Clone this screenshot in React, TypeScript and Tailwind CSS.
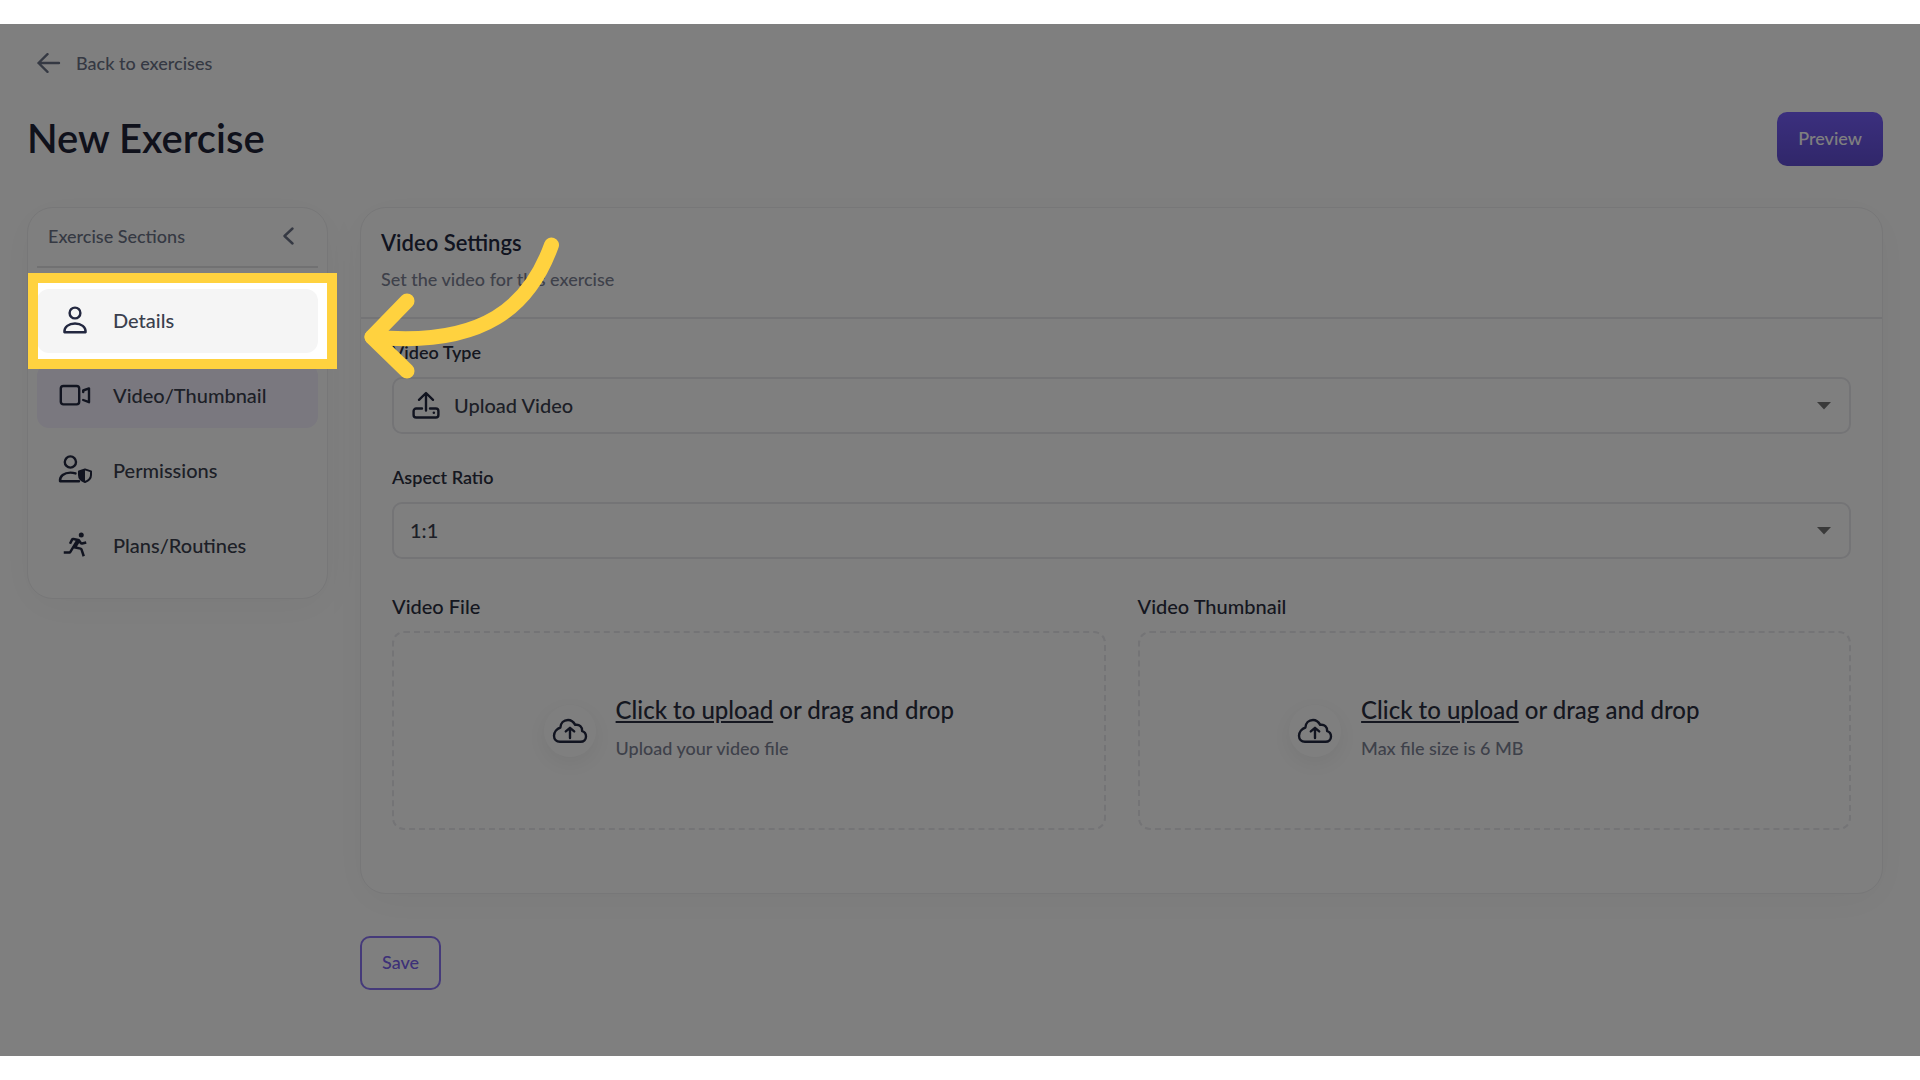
import type { ReactNode } from "react";
import { BiRun } from "react-icons/bi";

function PersonIcon() {
  return (
    <svg width="34" height="32" viewBox="0 0 34 32" fill="none" stroke="currentColor" strokeWidth="2.4" strokeLinejoin="round">
      <circle cx="17" cy="9" r="5.4" />
      <path d="M6.4 28.2h21.2c.4-5.2-4.4-8.7-10.6-8.7S6 23 6.4 28.2Z" />
    </svg>
  );
}

function VideoIcon() {
  return (
    <svg width="34" height="32" viewBox="0 0 34 32" fill="none" stroke="currentColor" strokeWidth="2.4" strokeLinejoin="round" strokeLinecap="round">
      <rect x="2.8" y="7" width="18.4" height="18.4" rx="2.6" />
      <path d="M25.2 13v-1.5L31 9.4v13.8l-5.8-2.2" />
    </svg>
  );
}

function PermissionsIcon() {
  return (
    <svg width="34" height="32" viewBox="0 0 34 32" fill="none" stroke="currentColor" strokeWidth="2.4" strokeLinejoin="round" strokeLinecap="round">
      <circle cx="12.4" cy="8" r="5.6" />
      <path d="M17.5 19.4c-1.500-.5-3.200-.8-5.100-.8-6.200 0-10.900 3.400-10.400 8.600h19" />
      <path d="M27 15.4l6 2v3.600c0 3.200-2.400 5.600-6 7-3.600-1.400-6-3.800-6-7v-3.600Z" strokeWidth="2" />
      <path d="M27 15.4v12.600c-3.600-1.400-6-3.800-6-7v-3.600Z" fill="currentColor" stroke="none" />
    </svg>
  );
}

function DriveUploadIcon() {
  return (
    <svg width="28" height="28" viewBox="0 0 28 28" fill="none" stroke="currentColor" strokeWidth="2.4" strokeLinejoin="round" strokeLinecap="round">
      <path d="M14 19.5V2.2M7 8.800l7-6.800 7 6.800" />
      <path d="M10 17.5H4.200a2.600 2.600 0 0 0-2.600 2.600v3.800a2.600 2.600 0 0 0 2.600 2.600h19.600a2.600 2.600 0 0 0 2.600-2.600v-3.800a2.600 2.600 0 0 0-2.600-2.600H18" />
      <path d="M21.800 21.800h.1" />
    </svg>
  );
}

function CloudUploadIcon() {
  return (
    <svg width="36" height="26" viewBox="0 0 36 26" fill="none" stroke="currentColor" strokeWidth="2.4" strokeLinejoin="round" strokeLinecap="round">
      <path d="M8 23.8h20.500c3.300 0 5.500-2.300 5.500-5.300 0-2.800-1.600-4.800-3.900-5.400.5-4.200-2.800-7-6.900-6.200C21.600 3.900 18.900 2 16 2c-4.400 0-7.300 3.300-7.600 7.500C4.800 10.700 2 14 2 17.800c0 3.600 2.400 6 6 6Z" />
      <path d="M18 20V10.200M13.800 13.400 18 9.800l4.200 3.600" />
    </svg>
  );
}

type SectionProps = {
  icon: ReactNode;
  label: string;
  className?: string;
  children?: ReactNode;
};

function Section({ icon, label, className = "", children }: SectionProps) {
  return (
    <li className="relative">
      <button
        type="button"
        className={`flex h-16 w-full items-center gap-[21px] rounded-xl pb-[2px] pl-[21px] text-xl font-medium text-[#3a3f4e] ${className}`}
      >
        <span className="flex w-[34px] justify-center text-[#232840]">{icon}</span>
        {label}
      </button>
      {children}
    </li>
  );
}

function SelectField({ id, label, value, icon }: { id: string; label: string; value: string; icon?: ReactNode }) {
  return (
    <div>
      <label htmlFor={id} className="block text-lg font-semibold leading-6 text-[#2a2e40]">
        {label}
      </label>
      <div className="relative mt-[13px]">
        {icon && <span className="absolute left-5 top-[14px] text-[#232840]">{icon}</span>}
        <select
          id={id}
          className={`h-[57px] w-full appearance-none rounded-[10px] border-2 border-[#e8e8ec] bg-white pb-[2px] text-xl font-medium text-[#3a3f4e] ${icon ? "pl-[60px]" : "pl-4"}`}
        >
          <option>{value}</option>
        </select>
        <svg className="pointer-events-none absolute right-5 top-[25px]" width="14" height="8" viewBox="0 0 14 8" fill="#757575">
          <path d="M0 0h14L7 7.5Z" />
        </svg>
      </div>
    </div>
  );
}

function UploadField({ id, title, hint }: { id: string; title: string; hint: string }) {
  return (
    <div>
      <h3 className="text-xl font-medium leading-6 text-[#2a2e40]">{title}</h3>
      <label htmlFor={id} className="relative mt-[13px] flex h-[199px] cursor-pointer items-center justify-center gap-5 rounded-xl border-2 border-dashed border-[#e8e8ec]">
        <input id={id} type="file" className="sr-only" />
        <span className="flex size-[52px] items-center justify-center rounded-full bg-white text-[#232840] shadow-[0_6px_24px_rgba(0,0,0,0.07)]">
          <CloudUploadIcon />
        </span>
        <span className="pb-[5px]">
          <span className="block text-2xl font-medium leading-8 text-[#2a2e40]">
            <span className="underline underline-offset-2">Click to upload</span> or drag and drop
          </span>
          <span className="mt-2 block text-lg font-medium leading-7 text-[#7c8294]">{hint}</span>
        </span>
      </label>
    </div>
  );
}

const card = "rounded-[26px] border border-[#eeeef0] bg-white shadow-[0_8px_40px_rgba(0,0,0,0.04)]";

export default function App() {
  return (
    <div className="min-h-screen bg-white py-6 font-['Lato','Liberation_Sans',sans-serif]">
      <main className="relative min-h-[calc(100vh-48px)] overflow-hidden bg-white pb-14 pl-[27px] pr-[37px] pt-[23px]">
        <a href="#exercises" className="ml-[10px] inline-flex h-8 items-center gap-[15px] text-lg font-medium text-[#6b7286]">
          <svg width="24" height="20" viewBox="0 0 24 20" fill="none" stroke="currentColor" strokeWidth="2.4" strokeLinecap="round" strokeLinejoin="round">
            <path d="M22 10H1.5M10.5 1.2 1.5 10l9 8.800" />
          </svg>
          Back to exercises
        </a>

        <div className="mt-[33px] flex h-[54px] items-center justify-between">
          <h1 className="pb-[3px] text-[40px] font-semibold text-[#1e2337]">New Exercise</h1>
          <button type="button" className="h-full rounded-[10px] bg-linear-to-b from-[#775ffd] to-[#614ed4] px-[21px] pb-[2px] text-lg font-medium text-white">
            Preview
          </button>
        </div>

        <div className="mt-[41px] flex items-start gap-8">
          <nav aria-label="Exercise Sections" className={`w-[301px] shrink-0 px-[9px] pb-5 ${card}`}>
            <div className="flex h-[60px] items-center justify-between border-b-2 border-[#e2e2e4] pb-[2px] pl-[11px] pr-6 text-lg font-medium text-[#6b7286]">
              Exercise Sections
              <button type="button" aria-label="Collapse sections">
                <svg width="11" height="18" viewBox="0 0 11 18" fill="none" stroke="currentColor" strokeWidth="2.4" strokeLinecap="round" strokeLinejoin="round">
                  <path d="M9.5 1.5 1.5 9l8 7.5" />
                </svg>
              </button>
            </div>
            <ul className="mt-[21px] flex flex-col gap-[11px]">
              <Section icon={<PersonIcon />} label="Details" className="bg-[#f5f5f5]">
                {/* spotlight: frames this item and dims everything around it */}
                <span className="pointer-events-none absolute -bottom-[6px] -right-[9px] -top-[6px] left-px z-10 shadow-[0_0_0_10px_#ffd23f,0_0_0_4000px_rgba(0,0,0,0.5)]" />
              </Section>
              <Section icon={<VideoIcon />} label="Video/Thumbnail" className="bg-[#f4f1ff]" />
              <Section icon={<PermissionsIcon />} label="Permissions" />
              <Section icon={<BiRun size={30} />} label="Plans/Routines" />
            </ul>
            <svg className="pointer-events-none absolute left-[360px] top-[208px] z-20" width="204" height="152" viewBox="0 0 204 152" fill="none" stroke="#ffd23f" strokeWidth="15" strokeLinecap="round" strokeLinejoin="round">
              <path d="M191.500 13C170 73 125 116 12 105" />
              <path d="M47 69 12 105l35 34" />
            </svg>
          </nav>

          <div className="min-w-0 grow">
            <section className={`pb-[63px] ${card}`}>
              <header className="border-b-2 border-[#e8e8ec] px-5 pb-[26px] pt-[19px]">
                <h2 className="text-[22px] font-semibold leading-8 text-[#232840]">Video Settings</h2>
                <p className="mt-2 text-lg font-medium leading-6 text-[#7c8294]">Set the video for this exercise</p>
              </header>
              <div className="flex flex-col gap-[31px] px-[31px] pt-[21px]">
                <SelectField id="video-type" label="Video Type" value="Upload Video" icon={<DriveUploadIcon />} />
                <SelectField id="aspect-ratio" label="Aspect Ratio" value="1:1" />
                <div className="mt-1 grid grid-cols-2 gap-8">
                  <UploadField id="video-file" title="Video File" hint="Upload your video file" />
                  <UploadField id="video-thumbnail" title="Video Thumbnail" hint="Max file size is 6 MB" />
                </div>
              </div>
            </section>
            <button type="button" className="mt-[42px] h-[54px] rounded-[10px] border-2 border-[#8a74f5] px-5 pb-[2px] text-lg font-medium text-[#7a62f0]">
              Save
            </button>
          </div>
        </div>
      </main>
    </div>
  );
}
